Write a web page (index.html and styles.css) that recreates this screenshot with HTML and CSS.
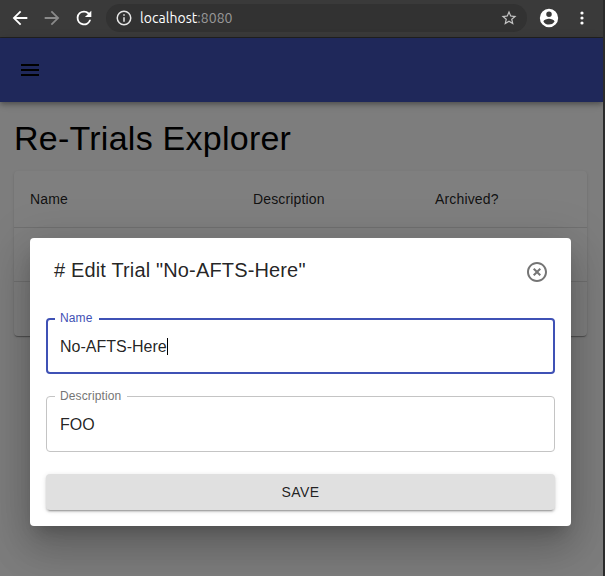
FILE: index.html
```html
<!DOCTYPE html>
<html lang="en">
<head>
<meta charset="utf-8">
<title>Re-Trials Explorer</title>
<link rel="stylesheet" href="styles.css">
</head>
<body>
<div class="window">
  <header class="browser-bar">
    <svg class="nav-icon" viewBox="0 0 24 24"><path d="M20 11H7.83l5.59-5.59L12 4l-8 8 8 8 1.41-1.41L7.83 13H20z"/></svg>
    <svg class="nav-icon nav-icon-off" viewBox="0 0 24 24"><path d="M12 4l-1.41 1.41L16.17 11H4v2h12.17l-5.58 5.59L12 20l8-8z"/></svg>
    <svg class="nav-icon" viewBox="0 0 24 24"><path d="M17.65 6.35A7.96 7.96 0 0 0 12 4a8 8 0 1 0 7.73 10h-2.08A6 6 0 1 1 12 6c1.66 0 3.14.69 4.22 1.78L13 11h7V4z"/></svg>
    <div class="address">
      <svg class="info-icon" viewBox="0 0 24 24"><path d="M11 7h2v2h-2zm0 4h2v6h-2zm1-9a10 10 0 1 0 0 20 10 10 0 0 0 0-20zm0 18a8 8 0 1 1 0-16 8 8 0 0 1 0 16z"/></svg>
      <span class="url">localhost<span class="port">:8080</span></span>
      <svg class="star-icon" viewBox="0 0 24 24"><path d="M22 9.24l-7.19-.62L12 2 9.19 8.63 2 9.24l5.46 4.73L5.82 21 12 17.27 18.18 21l-1.63-7.03L22 9.24zM12 15.4l-3.76 2.27 1-4.28-3.32-2.88 4.38-.38L12 6.1l1.71 4.04 4.38.38-3.32 2.88 1 4.28L12 15.4z"/></svg>
    </div>
    <svg class="user-icon" viewBox="0 0 24 24"><path d="M12 2a10 10 0 1 0 0 20 10 10 0 0 0 0-20zm0 3a3 3 0 1 1 0 6 3 3 0 0 1 0-6zm0 14.2a7.2 7.2 0 0 1-6-3.22c.03-1.99 4-3.08 6-3.08s5.97 1.09 6 3.08a7.2 7.2 0 0 1-6 3.22z"/></svg>
    <svg class="dots-icon" viewBox="0 0 4 14"><circle cx="2" cy="2" r="1.6"/><circle cx="2" cy="7" r="1.6"/><circle cx="2" cy="12" r="1.6"/></svg>
  </header>
  <div class="page">
    <nav class="app-bar">
      <svg class="menu-icon" viewBox="0 0 24 24"><path d="M3 18h18v-2H3v2zm0-5h18v-2H3v2zm0-7v2h18V6H3z"/></svg>
    </nav>
    <main class="content">
      <h1 class="heading">Re-Trials Explorer</h1>
      <div class="table">
        <div class="row row-head"><span>Name</span><span>Description</span><span>Archived?</span></div>
        <div class="row"></div>
        <div class="row"></div>
      </div>
    </main>
    <div class="backdrop">
      <section class="dialog">
        <div class="dialog-head">
          <h2 class="dialog-title"># Edit Trial "No-AFTS-Here"</h2>
          <svg class="close-icon" viewBox="0 0 24 24"><path d="M14.59 8L12 10.59 9.41 8 8 9.41 10.59 12 8 14.59 9.41 16 12 13.41 14.59 16 16 14.59 13.41 12 16 9.41 14.59 8zM12 2C6.47 2 2 6.47 2 12s4.47 10 10 10 10-4.47 10-10S17.53 2 12 2zm0 18c-4.41 0-8-3.59-8-8s3.59-8 8-8 8 3.59 8 8-3.59 8-8 8z"/></svg>
        </div>
        <div class="field field-focus"><span class="label">Name</span><span class="value">No-AFTS-Here</span><i class="caret"></i></div>
        <div class="field"><span class="label">Description</span><span class="value">FOO</span></div>
        <button class="save">SAVE</button>
      </section>
    </div>
  </div>
</div>
</body>
</html>
```
FILE: styles.css
```css
* { box-sizing: border-box; }
body {
  margin: 0;
  background: #2b2b2b;
  font-family: "Liberation Sans", Arial, sans-serif;
  color: rgba(0, 0, 0, .87);
}
svg { display: block; flex: none; }
.window {
  width: 603px;
  height: 576px;
  display: flex;
  flex-direction: column;
  overflow: hidden;
}
.browser-bar {
  flex: none;
  height: 38px;
  padding: 0 19px 1px 9px;
  display: flex;
  align-items: center;
  background: #3a3a3a;
  border-bottom: 1px solid #222;
  fill: #fff;
}
.nav-icon { width: 22px; height: 22px; margin-right: 10px; }
.nav-icon-off { fill: #8a8a8a; }
.address {
  width: 421px;
  height: 28px;
  margin-left: 1px;
  padding: 0 9px;
  display: flex;
  align-items: center;
  border-radius: 14px;
  background: #323232;
}
.info-icon { width: 18px; height: 18px; fill: #e6e6e6; }
.url {
  flex: 1;
  margin-left: 7px;
  font: 14px/20px Ubuntu, "Noto Sans", sans-serif;
  letter-spacing: .04px;
  color: #fff;
}
.port { color: #999; }
.star-icon { width: 18px; height: 18px; fill: #c4c4c4; }
.user-icon { width: 22px; height: 22px; margin-left: 11px; }
.dots-icon { width: 4px; height: 14px; margin-left: 20px; }

.page {
  position: relative;
  flex: 1;
  background: #fafafa;
}
.app-bar {
  position: relative;
  height: 64px;
  padding-left: 18px;
  display: flex;
  align-items: center;
  background: #3f51b5;
  box-shadow: 0 2px 4px -1px rgba(0,0,0,.2), 0 4px 5px rgba(0,0,0,.14), 0 1px 10px rgba(0,0,0,.12);
}
.menu-icon { width: 24px; height: 24px; }
.content { padding: 15px 16px 0 14px; }
.heading {
  margin: 0 0 12px;
  font-size: 34px;
  line-height: 42px;
  font-weight: 400;
  letter-spacing: .25px;
  color: #000;
}
.table {
  border-radius: 4px;
  background: #fff;
  box-shadow: 0 2px 1px -1px rgba(0,0,0,.2), 0 1px 1px rgba(0,0,0,.14), 0 1px 3px rgba(0,0,0,.12);
}
.row { height: 54px; border-bottom: 1px solid #e0e0e0; }
.row:last-child { border-bottom-color: transparent; }
.row-head {
  height: 57px;
  padding: 0 16px;
  display: grid;
  grid-template-columns: 223px 182px 1fr;
  align-items: center;
  font-size: 14px;
  line-height: 24px;
  letter-spacing: .15px;
}
.backdrop {
  position: absolute;
  inset: 0;
  padding: 200px 32px 0 30px;
  background: rgba(0, 0, 0, .5);
}
.dialog {
  height: 288px;
  padding: 16px;
  border-radius: 4px;
  background: #fff;
  box-shadow: 0 11px 15px -7px rgba(0,0,0,.2), 0 24px 38px 3px rgba(0,0,0,.14), 0 9px 46px 8px rgba(0,0,0,.12);
}
.dialog-head {
  height: 32px;
  margin-bottom: 32px;
  padding: 0 6px 0 8px;
  display: flex;
  justify-content: space-between;
}
.dialog-title {
  margin: 0;
  font-size: 20px;
  line-height: 32px;
  font-weight: 400;
  letter-spacing: .15px;
}
.close-icon { width: 24px; height: 24px; margin-top: 6px; fill: #757575; }
.field {
  position: relative;
  height: 56px;
  margin-bottom: 22px;
  padding: 0 13px;
  display: flex;
  align-items: center;
  border: 1px solid #c4c4c4;
  border-radius: 4px;
  font-size: 16px;
}
.field-focus { padding: 0 12px; border: 2px solid #3f51b5; }
.value { margin-top: 2px; }
.label {
  position: absolute;
  top: -8px;
  left: 8px;
  padding: 0 6px 0 5px;
  background: #fff;
  font-size: 12px;
  line-height: 14px;
  letter-spacing: .11px;
  color: #757575;
}
.field-focus .label { top: -9px; left: 7px; padding-right: 7px; color: #3f51b5; }
.caret { width: 1px; height: 17px; background: #000; }
.save {
  display: block;
  width: 100%;
  height: 36px;
  padding: 0;
  border: 0;
  border-radius: 4px;
  background: #e0e0e0;
  color: rgba(0, 0, 0, .87);
  font: 14px/24px "Liberation Sans", Arial, sans-serif;
  letter-spacing: .4px;
  box-shadow: 0 3px 1px -2px rgba(0,0,0,.2), 0 2px 2px rgba(0,0,0,.14), 0 1px 5px rgba(0,0,0,.12);
}
```
